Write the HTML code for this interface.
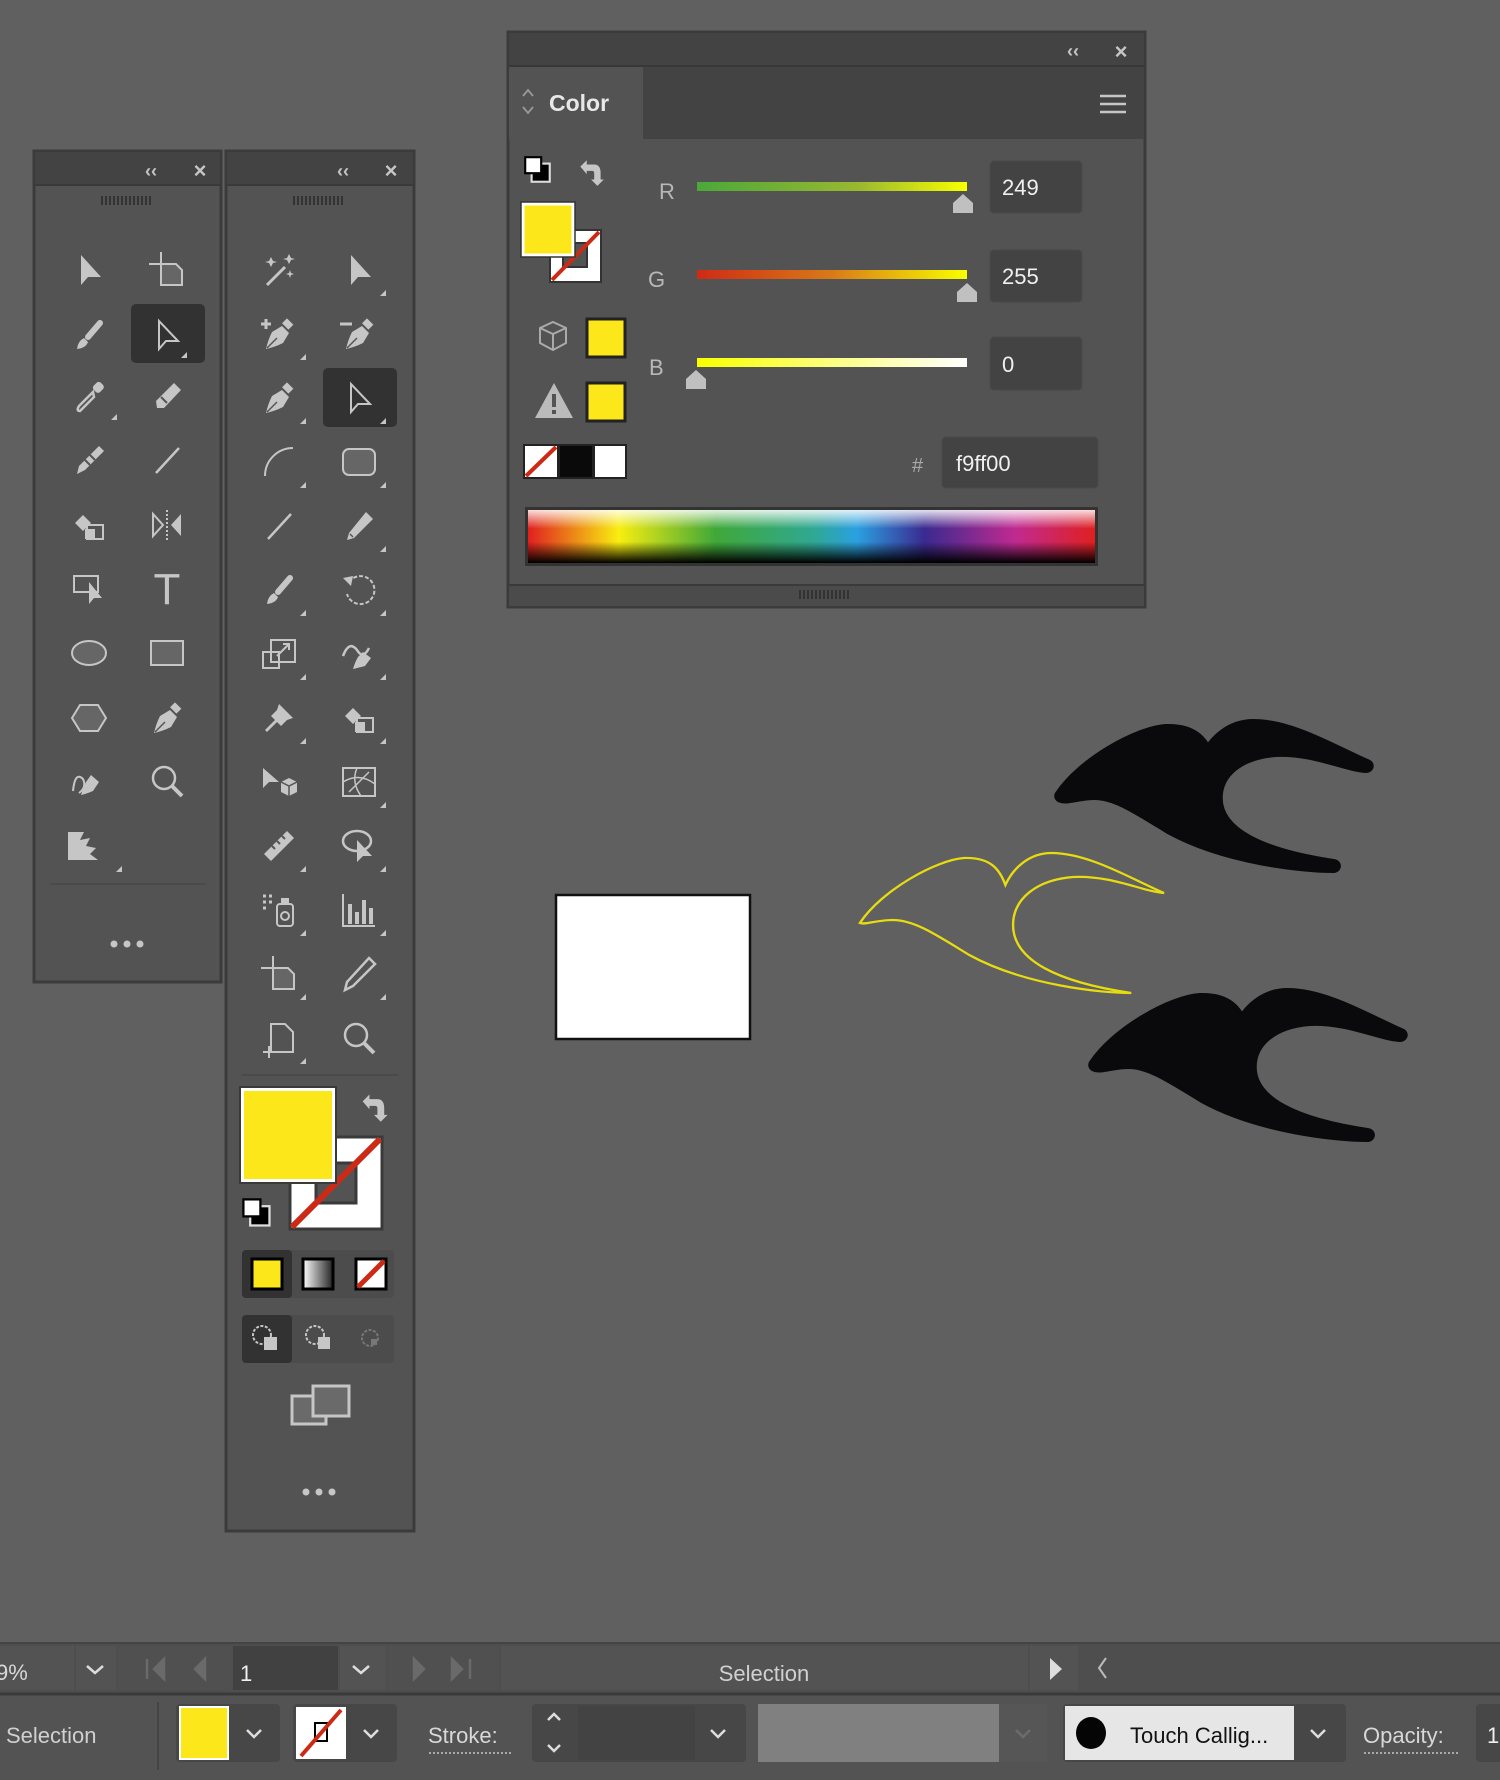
<!DOCTYPE html>
<html><head><meta charset="utf-8"><style>
html,body{margin:0;padding:0;background:#606060;}
svg{display:block}
text{font-family:"Liberation Sans",sans-serif}
</style></head><body>
<svg width="1500" height="1780" viewBox="0 0 1500 1780" xmlns="http://www.w3.org/2000/svg">
<defs>
<linearGradient id="gR" x1="0" x2="1"><stop offset="0" stop-color="#4aa83a"/><stop offset="0.6" stop-color="#9ab830"/><stop offset="1" stop-color="#f9ff00"/></linearGradient>
<linearGradient id="gG" x1="0" x2="1"><stop offset="0" stop-color="#d02a14"/><stop offset="0.5" stop-color="#d87a18"/><stop offset="1" stop-color="#f9ff00"/></linearGradient>
<linearGradient id="gB" x1="0" x2="1"><stop offset="0" stop-color="#f9ff00"/><stop offset="1" stop-color="#ffffff"/></linearGradient>
<linearGradient id="spec" x1="0" x2="1"><stop offset="0" stop-color="#e02020"/><stop offset="0.16" stop-color="#f8ee10"/><stop offset="0.33" stop-color="#40a838"/><stop offset="0.5" stop-color="#30a890"/><stop offset="0.58" stop-color="#2aa0e0"/><stop offset="0.7" stop-color="#3a2a90"/><stop offset="0.86" stop-color="#c02a90"/><stop offset="1" stop-color="#e02020"/></linearGradient>
<linearGradient id="specV" x1="0" x2="0" y1="0" y2="1"><stop offset="0" stop-color="#fff" stop-opacity="0.85"/><stop offset="0.35" stop-color="#fff" stop-opacity="0"/><stop offset="0.6" stop-color="#000" stop-opacity="0"/><stop offset="1" stop-color="#000" stop-opacity="1"/></linearGradient>
<linearGradient id="grad" x1="0" x2="1"><stop offset="0" stop-color="#fff"/><stop offset="1" stop-color="#222"/></linearGradient>
<symbol id="arrowF" viewBox="0 0 40 40"><polygon points="12,5 12,35 19,27 32,27" fill="#c6c6c6"/></symbol>
<symbol id="arrowO" viewBox="0 0 40 40"><polygon points="12,6 12,34 19,26 31,26" fill="none" stroke="#c6c6c6" stroke-width="2"/></symbol>
<symbol id="brush" viewBox="0 0 40 40"><line x1="31" y1="8" x2="19" y2="22" stroke="#c6c6c6" stroke-width="6" stroke-linecap="round"/><path d="M8,34 Q9,26 15,23 L19,27 Q17,33 8,34Z" fill="#c6c6c6"/></symbol>
<symbol id="pen" viewBox="0 0 40 40"><rect x="24" y="6" width="9" height="7" transform="rotate(45 28 10)" fill="#c6c6c6"/><path d="M23,12 L30,19 L24,29 Q16,33 7,35 Q9,26 13,18Z" fill="#c6c6c6"/><line x1="8" y1="34" x2="18" y2="24" stroke="#555" stroke-width="1.5"/></symbol>
<symbol id="pencil" viewBox="0 0 40 40"><polygon points="27,6 34,13 15,32 8,34 10,27" fill="#c6c6c6"/><line x1="11" y1="28" x2="14" y2="31" stroke="#555" stroke-width="1.5"/></symbol>
<symbol id="eraser" viewBox="0 0 40 40"><polygon points="27,6 34,13 17,31 10,31 9,24" fill="#c6c6c6"/><line x1="14" y1="20" x2="20" y2="26" stroke="#555" stroke-width="2"/></symbol>
<symbol id="drop" viewBox="0 0 40 40"><rect x="25" y="5" width="9" height="10" rx="3" transform="rotate(45 29 10)" fill="#c6c6c6"/><path d="M24,15 L10,29 Q7,34 11,34 L25,20Z" fill="none" stroke="#c6c6c6" stroke-width="2.5"/></symbol>
<symbol id="line" viewBox="0 0 40 40"><line x1="9" y1="33" x2="32" y2="8" stroke="#c6c6c6" stroke-width="2.5"/></symbol>
<symbol id="blob" viewBox="0 0 40 40"><path d="M30,6 L35,11 L16,30 L8,34 L10,26Z" fill="#c6c6c6"/><line x1="20" y1="14" x2="26" y2="20" stroke="#555" stroke-width="2"/><line x1="15" y1="19" x2="21" y2="25" stroke="#555" stroke-width="2"/></symbol>
<symbol id="bucket" viewBox="0 0 40 40"><path d="M6,18 L14,10 L22,18 L14,26Z" fill="#c6c6c6"/><rect x="18" y="20" width="16" height="14" fill="none" stroke="#c6c6c6" stroke-width="2"/><rect x="16" y="24" width="10" height="10" fill="#c6c6c6"/></symbol>
<symbol id="reflect" viewBox="0 0 40 40"><polygon points="6,9 6,31 16,20" fill="none" stroke="#c6c6c6" stroke-width="2"/><polygon points="34,9 34,31 24,20" fill="#c6c6c6"/><line x1="20" y1="5" x2="20" y2="36" stroke="#c6c6c6" stroke-width="2" stroke-dasharray="2 2"/></symbol>
<symbol id="touch" viewBox="0 0 40 40"><rect x="5" y="8" width="24" height="16" fill="none" stroke="#c6c6c6" stroke-width="2"/><polygon points="20,14 20,36 25,30 33,30" fill="#c6c6c6"/></symbol>
<symbol id="rect" viewBox="0 0 40 40"><rect x="4" y="8" width="32" height="24" fill="#666" stroke="#c6c6c6" stroke-width="2"/></symbol>
<symbol id="rrect" viewBox="0 0 40 40"><rect x="4" y="7" width="32" height="26" rx="6" fill="#666" stroke="#c6c6c6" stroke-width="2"/></symbol>
<symbol id="ellipse" viewBox="0 0 40 40"><ellipse cx="20" cy="20" rx="17" ry="12" fill="#666" stroke="#c6c6c6" stroke-width="2"/></symbol>
<symbol id="hex" viewBox="0 0 40 40"><polygon points="11,7 29,7 37,20 29,33 11,33 3,20" fill="#666" stroke="#c6c6c6" stroke-width="2"/></symbol>
<symbol id="zoom" viewBox="0 0 40 40"><circle cx="17" cy="17" r="11" fill="none" stroke="#c6c6c6" stroke-width="2.5"/><line x1="25" y1="25" x2="35" y2="35" stroke="#c6c6c6" stroke-width="4"/></symbol>
<symbol id="curv" viewBox="0 0 40 40"><path d="M4,30 Q6,10 14,18 Q18,26 10,32" fill="none" stroke="#c6c6c6" stroke-width="2"/><path d="M22,14 L30,21 L24,30 Q17,33 12,34 Q14,27 17,21Z" fill="#c6c6c6"/></symbol>
<symbol id="shaper" viewBox="0 0 40 40"><path d="M6,6 L6,34 L36,34 L28,28 L34,22 L24,20 L28,12 L18,14 L22,6Z" fill="#c6c6c6"/></symbol>
<symbol id="artb" viewBox="0 0 40 40"><line x1="14" y1="2" x2="14" y2="14" stroke="#c6c6c6" stroke-width="2"/><line x1="2" y1="14" x2="14" y2="14" stroke="#c6c6c6" stroke-width="2"/><path d="M14,14 L29,14 L35,20 L35,35 L14,35Z" fill="#666" stroke="#c6c6c6" stroke-width="2"/></symbol>
<symbol id="wand" viewBox="0 0 40 40"><line x1="8" y1="35" x2="26" y2="17" stroke="#c6c6c6" stroke-width="3"/><path d="M12,7 l2,4 4,1 -4,1 -2,4 -2,-4 -4,-1 4,-1z M30,4 l2,4 4,1 -4,1 -2,4 -2,-4 -4,-1 4,-1z M31,20 l1,3 3,1 -3,1 -1,3 -1,-3 -3,-1 3,-1z" fill="#c6c6c6"/></symbol>
<symbol id="penplus" viewBox="0 0 40 40"><use href="#pen"/><path d="M2,10 H12 M7,5 V15" stroke="#c6c6c6" stroke-width="3"/></symbol>
<symbol id="penminus" viewBox="0 0 40 40"><use href="#pen"/><path d="M1,10 H13" stroke="#c6c6c6" stroke-width="3"/></symbol>
<symbol id="arc" viewBox="0 0 40 40"><path d="M6,34 A28,28 0 0 1 34,6" fill="none" stroke="#c6c6c6" stroke-width="2"/></symbol>
<symbol id="rotate" viewBox="0 0 40 40"><path d="M10,12 A14,14 0 1 1 8,24" fill="none" stroke="#c6c6c6" stroke-width="2" stroke-dasharray="4 2"/><polygon points="4,8 14,6 12,16" fill="#c6c6c6"/></symbol>
<symbol id="scale" viewBox="0 0 40 40"><rect x="4" y="18" width="16" height="16" fill="none" stroke="#c6c6c6" stroke-width="2"/><rect x="12" y="6" width="24" height="22" fill="none" stroke="#c6c6c6" stroke-width="2"/><path d="M18,22 L30,10 M24,10 H30 V16" stroke="#c6c6c6" stroke-width="2" fill="none"/></symbol>
<symbol id="warp" viewBox="0 0 40 40"><path d="M4,22 Q10,6 18,16 Q24,26 30,14" fill="none" stroke="#c6c6c6" stroke-width="2.5"/><path d="M24,18 L32,24 L26,32 Q18,34 14,35 Q16,28 19,23Z" fill="#c6c6c6"/></symbol>
<symbol id="pin" viewBox="0 0 40 40"><path d="M20,6 L34,20 L28,22 L22,28 L18,24 L8,34 L6,32 L16,22 L12,18 L18,12Z" fill="#c6c6c6"/></symbol>
<symbol id="persp" viewBox="0 0 40 40"><polygon points="4,6 4,26 10,20 20,20" fill="#c6c6c6"/><path d="M22,20 L30,16 L38,20 L38,30 L30,34 L22,30Z" fill="#c6c6c6"/><path d="M22,20 L30,24 L38,20 M30,24 V34" stroke="#555" stroke-width="1.5" fill="none"/></symbol>
<symbol id="mesh" viewBox="0 0 40 40"><rect x="4" y="6" width="32" height="28" fill="none" stroke="#c6c6c6" stroke-width="2"/><path d="M4,20 Q20,10 36,22 M18,6 Q12,20 22,34 M10,30 L30,10" fill="none" stroke="#c6c6c6" stroke-width="1.5"/></symbol>
<symbol id="measure" viewBox="0 0 40 40"><polygon points="28,5 35,12 12,35 5,28" fill="#c6c6c6"/><path d="M13,20 l3,3 M18,15 l3,3 M23,10 l3,3" stroke="#555" stroke-width="2"/></symbol>
<symbol id="lasso" viewBox="0 0 40 40"><ellipse cx="18" cy="15" rx="14" ry="10" fill="none" stroke="#c6c6c6" stroke-width="2.5"/><polygon points="18,14 18,36 24,30 33,30" fill="#c6c6c6"/></symbol>
<symbol id="spray" viewBox="0 0 40 40"><rect x="18" y="14" width="16" height="22" rx="3" fill="none" stroke="#c6c6c6" stroke-width="2"/><circle cx="26" cy="26" r="4" fill="none" stroke="#c6c6c6" stroke-width="2"/><rect x="22" y="8" width="8" height="6" fill="#c6c6c6"/><path d="M4,6h3M10,6h3M4,12h3M10,12h3M4,18h3" stroke="#c6c6c6" stroke-width="3"/></symbol>
<symbol id="graph" viewBox="0 0 40 40"><path d="M4,4 V36 H36" fill="none" stroke="#c6c6c6" stroke-width="2"/><rect x="9" y="14" width="4" height="20" fill="#c6c6c6"/><rect x="16" y="22" width="4" height="12" fill="#c6c6c6"/><rect x="23" y="10" width="4" height="24" fill="#c6c6c6"/><rect x="30" y="18" width="4" height="16" fill="#c6c6c6"/></symbol>
<symbol id="knife" viewBox="0 0 40 40"><path d="M30,4 L36,10 L14,32 L6,36 L8,28Z" fill="none" stroke="#c6c6c6" stroke-width="2.5"/></symbol>
<symbol id="slice" viewBox="0 0 40 40"><path d="M12,6 H26 L34,14 V34 H12Z" fill="none" stroke="#c6c6c6" stroke-width="2"/><path d="M4,34 H16 M10,28 V40" stroke="#c6c6c6" stroke-width="2"/></symbol>
<symbol id="corner" viewBox="0 0 40 40"><polygon points="34,40 40,34 40,40" fill="#c6c6c6"/></symbol>
<symbol id="swapS" viewBox="0 0 30 30"><rect x="9" y="9" width="17" height="17" fill="#000" stroke="#ddd" stroke-width="2"/><rect x="3" y="3" width="15" height="15" fill="#fff" stroke="#000" stroke-width="2"/></symbol>
<symbol id="undo" viewBox="0 0 30 30"><path d="M5,10 L11,4 V8 H18 Q24,8 24,16 V22 H27 L21,28 L15,22 H18 V16 Q18,14 16,14 H11 V17Z" fill="#c6c6c6"/></symbol>
<symbol id="bird" viewBox="0 0 340 300" preserveAspectRatio="none" style="overflow:visible"><path d="M20,203 C40,170 90,140 115,138 C140,137 148,150 153,165 C160,148 175,133 195,133 C230,133 270,160 298,173 C280,172 250,155 215,157 C180,160 160,180 160,205 C160,240 200,262 268,273 C240,273 170,265 120,235 C90,215 70,200 50,200 C35,200 25,205 20,203 Z"/></symbol>
</defs>

<rect width="1500" height="1780" fill="#606060"/>

<!-- TOOLBAR 1 -->
<rect x="34" y="151" width="187" height="831" fill="#535353" stroke="#3b3b3b" stroke-width="3"/>
<rect x="35" y="152" width="185" height="33" fill="#434343"/>
<line x1="34" y1="185" x2="221" y2="185" stroke="#3a3a3a" stroke-width="2"/>
<text x="151" y="177" fill="#c6c6c6" font-size="18" text-anchor="middle" font-weight="bold">‹‹</text>
<text x="200" y="178" fill="#c6c6c6" font-size="22" text-anchor="middle" font-weight="bold">×</text>
<path d="M102,196v9M106,196v9M110,196v9M114,196v9M118,196v9M122,196v9M126,196v9M130,196v9M134,196v9M138,196v9M142,196v9M146,196v9M150,196v9" stroke="#333" stroke-width="2"/>
<rect x="131" y="304" width="74" height="59" rx="5" fill="#323232"/>
<g>
<use href="#arrowF" x="69" y="250" width="40" height="40"/><use href="#artb" x="147" y="250" width="40" height="40"/>
<use href="#brush" x="69" y="315" width="40" height="40"/><use href="#arrowO" x="147" y="315" width="40" height="40"/><use href="#corner" x="147" y="318" width="40" height="40"/>
<use href="#drop" x="69" y="377" width="40" height="40"/><use href="#corner" x="77" y="380" width="40" height="40"/><use href="#eraser" x="147" y="377" width="40" height="40"/>
<use href="#blob" x="69" y="440" width="40" height="40"/><use href="#line" x="147" y="440" width="40" height="40"/>
<use href="#bucket" x="69" y="505" width="40" height="40"/><use href="#reflect" x="147" y="505" width="40" height="40"/>
<use href="#touch" x="69" y="568" width="40" height="40"/><text x="167" y="604" fill="#c6c6c6" font-size="44" font-family="Liberation Serif" text-anchor="middle">T</text>
<use href="#ellipse" x="69" y="633" width="40" height="40"/><use href="#rect" x="147" y="633" width="40" height="40"/>
<use href="#hex" x="69" y="698" width="40" height="40"/><use href="#pen" x="147" y="698" width="40" height="40"/>
<use href="#curv" x="69" y="761" width="40" height="40"/><use href="#zoom" x="147" y="761" width="40" height="40"/>
<use href="#shaper" x="62" y="826" width="40" height="40"/><use href="#corner" x="82" y="832" width="40" height="40"/>
</g>
<line x1="50" y1="884" x2="206" y2="884" stroke="#4a4a4a" stroke-width="2"/>
<circle cx="114" cy="944" r="3.5" fill="#c6c6c6"/><circle cx="127" cy="944" r="3.5" fill="#c6c6c6"/><circle cx="140" cy="944" r="3.5" fill="#c6c6c6"/>

<!-- TOOLBAR 2 -->
<rect x="226" y="151" width="188" height="1380" fill="#535353" stroke="#3b3b3b" stroke-width="3"/>
<rect x="227" y="152" width="186" height="33" fill="#434343"/>
<line x1="226" y1="185" x2="414" y2="185" stroke="#3a3a3a" stroke-width="2"/>
<text x="343" y="177" fill="#c6c6c6" font-size="18" text-anchor="middle" font-weight="bold">‹‹</text>
<text x="391" y="178" fill="#c6c6c6" font-size="22" text-anchor="middle" font-weight="bold">×</text>
<path d="M294,196v9M298,196v9M302,196v9M306,196v9M310,196v9M314,196v9M318,196v9M322,196v9M326,196v9M330,196v9M334,196v9M338,196v9M342,196v9" stroke="#333" stroke-width="2"/>
<rect x="323" y="368" width="74" height="59" rx="5" fill="#323232"/>
<g>
<use href="#wand" x="259" y="250" width="40" height="40"/><use href="#arrowF" x="339" y="250" width="40" height="40"/><use href="#corner" x="346" y="256" width="40" height="40"/>
<use href="#penplus" x="259" y="314" width="40" height="40"/><use href="#corner" x="266" y="320" width="40" height="40"/><use href="#penminus" x="339" y="314" width="40" height="40"/>
<use href="#pen" x="259" y="378" width="40" height="40"/><use href="#corner" x="266" y="384" width="40" height="40"/><use href="#arrowO" x="339" y="378" width="40" height="40"/><use href="#corner" x="346" y="384" width="40" height="40"/>
<use href="#arc" x="259" y="442" width="40" height="40"/><use href="#corner" x="266" y="448" width="40" height="40"/><use href="#rrect" x="339" y="442" width="40" height="40"/><use href="#corner" x="346" y="448" width="40" height="40"/>
<use href="#line" x="259" y="506" width="40" height="40"/><use href="#pencil" x="339" y="506" width="40" height="40"/><use href="#corner" x="346" y="512" width="40" height="40"/>
<use href="#brush" x="259" y="570" width="40" height="40"/><use href="#corner" x="266" y="576" width="40" height="40"/><use href="#rotate" x="339" y="570" width="40" height="40"/><use href="#corner" x="346" y="576" width="40" height="40"/>
<use href="#scale" x="259" y="634" width="40" height="40"/><use href="#corner" x="266" y="640" width="40" height="40"/><use href="#warp" x="339" y="634" width="40" height="40"/><use href="#corner" x="346" y="640" width="40" height="40"/>
<use href="#pin" x="259" y="698" width="40" height="40"/><use href="#corner" x="266" y="704" width="40" height="40"/><use href="#bucket" x="339" y="698" width="40" height="40"/><use href="#corner" x="346" y="704" width="40" height="40"/>
<use href="#persp" x="259" y="762" width="40" height="40"/><use href="#mesh" x="339" y="762" width="40" height="40"/><use href="#corner" x="346" y="768" width="40" height="40"/>
<use href="#measure" x="259" y="826" width="40" height="40"/><use href="#corner" x="266" y="832" width="40" height="40"/><use href="#lasso" x="339" y="826" width="40" height="40"/><use href="#corner" x="346" y="832" width="40" height="40"/>
<use href="#spray" x="259" y="890" width="40" height="40"/><use href="#corner" x="266" y="896" width="40" height="40"/><use href="#graph" x="339" y="890" width="40" height="40"/><use href="#corner" x="346" y="896" width="40" height="40"/>
<use href="#artb" x="259" y="954" width="40" height="40"/><use href="#corner" x="266" y="960" width="40" height="40"/><use href="#knife" x="339" y="954" width="40" height="40"/><use href="#corner" x="346" y="960" width="40" height="40"/>
<use href="#slice" x="259" y="1018" width="40" height="40"/><use href="#corner" x="266" y="1024" width="40" height="40"/><use href="#zoom" x="339" y="1018" width="40" height="40"/>
</g>
<line x1="242" y1="1075" x2="398" y2="1075" stroke="#4a4a4a" stroke-width="2"/>
<rect x="290" y="1137" width="92" height="92" fill="#fff" stroke="#3a3a3a" stroke-width="3"/>
<rect x="316" y="1163" width="40" height="40" fill="#535353" stroke="#3a3a3a" stroke-width="3"/>
<line x1="292" y1="1227" x2="380" y2="1139" stroke="#cc2a14" stroke-width="6"/>
<rect x="242" y="1089" width="92" height="92" fill="#fce71a" stroke="#fff" stroke-width="4"/>
<rect x="240" y="1087" width="96" height="96" fill="none" stroke="#3a3a3a" stroke-width="2"/>
<use href="#undo" x="357" y="1090" width="34" height="34"/>
<use href="#swapS" x="240" y="1196" width="34" height="34"/>
<rect x="242" y="1250" width="152" height="48" rx="4" fill="#4c4c4c"/>
<rect x="242" y="1250" width="50" height="48" rx="4" fill="#323232"/>
<rect x="252" y="1259" width="30" height="30" fill="#fce71a" stroke="#000" stroke-width="3"/>
<rect x="303" y="1259" width="30" height="30" fill="url(#grad)" stroke="#000" stroke-width="3"/>
<rect x="356" y="1259" width="30" height="30" fill="#fff" stroke="#000" stroke-width="3"/>
<line x1="358" y1="1287" x2="384" y2="1261" stroke="#cc2a14" stroke-width="5"/>
<rect x="242" y="1315" width="152" height="48" rx="4" fill="#4c4c4c"/>
<rect x="242" y="1315" width="50" height="48" rx="4" fill="#323232"/>
<circle cx="262" cy="1335" r="9" fill="none" stroke="#c6c6c6" stroke-width="2" stroke-dasharray="3 1.5"/><rect x="264" y="1337" width="13" height="13" fill="#c6c6c6"/>
<circle cx="315" cy="1335" r="9" fill="none" stroke="#c6c6c6" stroke-width="2" stroke-dasharray="3 1.5"/><rect x="318" y="1337" width="12" height="12" fill="#c6c6c6"/>
<circle cx="370" cy="1338" r="8" fill="none" stroke="#777" stroke-width="2" stroke-dasharray="3 1.5"/><rect x="371" y="1339" width="6" height="6" fill="#777"/>
<rect x="292" y="1396" width="34" height="28" fill="#6a6a6a" stroke="#c6c6c6" stroke-width="3"/>
<rect x="313" y="1386" width="36" height="30" fill="#6a6a6a" stroke="#c6c6c6" stroke-width="3"/>
<circle cx="306" cy="1492" r="3.5" fill="#c6c6c6"/><circle cx="319" cy="1492" r="3.5" fill="#c6c6c6"/><circle cx="332" cy="1492" r="3.5" fill="#c6c6c6"/>

<!-- COLOR PANEL -->
<rect x="508" y="32" width="637" height="575" fill="#535353" stroke="#3b3b3b" stroke-width="3"/>
<rect x="509" y="33" width="635" height="33" fill="#434343"/>
<text x="1073" y="57" fill="#c6c6c6" font-size="18" text-anchor="middle" font-weight="bold">‹‹</text>
<text x="1121" y="59" fill="#c6c6c6" font-size="22" text-anchor="middle" font-weight="bold">×</text>
<rect x="509" y="66" width="635" height="73" fill="#434343"/>
<line x1="509" y1="66" x2="1144" y2="66" stroke="#383838" stroke-width="2"/>
<rect x="509" y="67" width="134" height="73" fill="#535353"/>
<path d="M523,96 l5,-6 5,6 M523,107 l5,6 5,-6" fill="none" stroke="#999" stroke-width="1.8"/>
<text x="549" y="111" fill="#e8e8e8" font-size="23" font-weight="bold">Color</text>
<path d="M1100,96h26M1100,104h26M1100,112h26" stroke="#c6c6c6" stroke-width="2.5"/>
<use href="#swapS" x="522" y="154" width="32" height="32"/>
<use href="#undo" x="575" y="156" width="32" height="32"/>
<rect x="550" y="230" width="51" height="52" fill="#fff" stroke="#333" stroke-width="2"/>
<rect x="563" y="243" width="24" height="24" fill="#535353" stroke="#333" stroke-width="2"/>
<line x1="552" y1="280" x2="599" y2="232" stroke="#cc2a14" stroke-width="4"/>
<rect x="523" y="204" width="50" height="51" fill="#fce71a" stroke="#fff" stroke-width="3"/>
<rect x="521" y="202" width="54" height="55" fill="none" stroke="#333" stroke-width="1.5"/>
<text x="659" y="199" fill="#b8b8b8" font-size="22">R</text>
<text x="648" y="287" fill="#b8b8b8" font-size="22">G</text>
<text x="649" y="375" fill="#b8b8b8" font-size="22">B</text>
<rect x="697" y="182" width="270" height="9" fill="url(#gR)"/>
<rect x="697" y="270" width="270" height="9" fill="url(#gG)"/>
<rect x="697" y="358" width="270" height="9" fill="url(#gB)"/>
<path d="M953,213 v-10 l10,-9 l10,9 v10z" fill="#c0c0c0"/>
<path d="M957,302 v-10 l10,-9 l10,9 v10z" fill="#c0c0c0"/>
<path d="M686,389 v-10 l10,-9 l10,9 v10z" fill="#c0c0c0"/>
<rect x="990" y="161" width="92" height="52" rx="4" fill="#434343" stroke="#4a4a4a"/>
<rect x="990" y="250" width="92" height="52" rx="4" fill="#434343" stroke="#4a4a4a"/>
<rect x="990" y="337" width="92" height="53" rx="4" fill="#434343" stroke="#4a4a4a"/>
<text x="1002" y="195" fill="#f0f0f0" font-size="22">249</text>
<text x="1002" y="284" fill="#f0f0f0" font-size="22">255</text>
<text x="1002" y="372" fill="#f0f0f0" font-size="22">0</text>
<path d="M553,322 l13,6 v15 l-13,7 l-13,-7 v-15z M540,328 l13,6 13,-6 M553,334 v16" fill="none" stroke="#aaa" stroke-width="2"/>
<rect x="587" y="319" width="38" height="38" fill="#fce71a" stroke="#222" stroke-width="3"/>
<path d="M554,383 L573,418 L535,418Z" fill="#bbb"/><rect x="552" y="394" width="4" height="13" fill="#535353"/><rect x="552" y="410" width="4" height="4" fill="#535353"/>
<rect x="587" y="383" width="38" height="38" fill="#fce71a" stroke="#222" stroke-width="3"/>
<rect x="523" y="444" width="104" height="35" fill="#222"/>
<rect x="525" y="446" width="32" height="31" fill="#fff"/><line x1="526" y1="476" x2="556" y2="447" stroke="#cc2a14" stroke-width="4"/>
<rect x="560" y="446" width="32" height="31" fill="#0a0a0a"/>
<rect x="595" y="446" width="30" height="31" fill="#fff"/>
<text x="912" y="472" fill="#aaa" font-size="20">#</text>
<rect x="942" y="437" width="156" height="51" rx="4" fill="#434343" stroke="#4a4a4a"/>
<text x="956" y="471" fill="#f0f0f0" font-size="22">f9ff00</text>
<rect x="525" y="507" width="573" height="59" fill="#333"/>
<rect x="528" y="510" width="567" height="53" fill="url(#spec)"/>
<rect x="528" y="510" width="567" height="53" fill="url(#specV)"/>
<rect x="509" y="585" width="635" height="21" fill="#4b4b4b"/>
<line x1="509" y1="585" x2="1144" y2="585" stroke="#3a3a3a" stroke-width="2"/>
<path d="M800,590v9M804,590v9M808,590v9M812,590v9M816,590v9M820,590v9M824,590v9M828,590v9M832,590v9M836,590v9M840,590v9M844,590v9M848,590v9" stroke="#333" stroke-width="2"/>

<!-- ARTWORK -->
<rect x="556" y="895" width="194" height="144" fill="#fff" stroke="#111" stroke-width="2.5"/>
<use href="#bird" x="838" y="720" width="372" height="300" fill="none" stroke="#e8dc10" stroke-width="2.2"/>
<use href="#bird" x="1040" y="593" width="372" height="300" fill="#0a0a0c" stroke="#0a0a0c" stroke-width="14" stroke-linejoin="round"/>
<use href="#bird" x="1074" y="862" width="372" height="300" fill="#0a0a0c" stroke="#0a0a0c" stroke-width="14" stroke-linejoin="round"/>

<!-- STATUS BAR -->
<rect x="0" y="1642" width="1500" height="52" fill="#4e4e4e"/>
<line x1="0" y1="1643" x2="1500" y2="1643" stroke="#444" stroke-width="2"/>
<rect x="0" y="1646" width="74" height="44" fill="#535353"/>
<rect x="76" y="1646" width="40" height="44" fill="#535353"/>
<rect x="118" y="1646" width="113" height="44" fill="#505050"/>
<rect x="233" y="1646" width="105" height="44" fill="#414141"/>
<rect x="340" y="1646" width="46" height="44" fill="#535353"/>
<rect x="388" y="1646" width="111" height="44" fill="#505050"/>
<rect x="501" y="1646" width="527" height="44" fill="#535353"/>
<rect x="1030" y="1646" width="48" height="44" fill="#535353"/>
<text x="-4" y="1680" fill="#d8d8d8" font-size="22">9%</text>
<path d="M87,1666 l8,7 8,-7" fill="none" stroke="#ddd" stroke-width="2.5"/>
<path d="M147,1659 v20 M164,1659 l-10,10 10,10z M205,1659 l-10,10 10,10z" fill="#6a6a6a" stroke="#6a6a6a" stroke-width="2.5"/>
<text x="240" y="1681" fill="#f0f0f0" font-size="22">1</text>
<path d="M353,1666 l8,7 8,-7" fill="none" stroke="#ddd" stroke-width="2.5"/>
<path d="M414,1659 l10,10 -10,10z M452,1659 l10,10 -10,10z M470,1659 v20" fill="#6a6a6a" stroke="#6a6a6a" stroke-width="2.5"/>
<text x="764" y="1681" fill="#d0d0d0" font-size="22" text-anchor="middle">Selection</text>
<path d="M1050,1658 l12,11 -12,11z" fill="#ddd"/>
<path d="M1106,1658 l-7,10 7,10" fill="none" stroke="#bbb" stroke-width="2"/>

<!-- CONTROL BAR -->
<rect x="0" y="1694" width="1500" height="86" fill="#535353"/>
<line x1="0" y1="1694" x2="1500" y2="1694" stroke="#3a3a3a" stroke-width="3"/>
<text x="6" y="1743" fill="#d0d0d0" font-size="22">Selection</text>
<line x1="158" y1="1702" x2="158" y2="1770" stroke="#444" stroke-width="2"/>
<rect x="176" y="1704" width="104" height="58" rx="4" fill="#474747"/>
<rect x="180" y="1707" width="48" height="52" fill="#fce71a" stroke="#fff" stroke-width="2"/>
<path d="M247,1730 l7,7 7,-7" fill="none" stroke="#ddd" stroke-width="2.5"/>
<rect x="293" y="1704" width="104" height="58" rx="4" fill="#474747"/>
<rect x="296" y="1707" width="50" height="52" fill="#fff"/>
<rect x="315" y="1723" width="12" height="18" fill="none" stroke="#000" stroke-width="2"/>
<line x1="301" y1="1756" x2="341" y2="1710" stroke="#cc2a14" stroke-width="4"/>
<path d="M364,1730 l7,7 7,-7" fill="none" stroke="#ddd" stroke-width="2.5"/>
<text x="428" y="1743" fill="#d8d8d8" font-size="22">Stroke:</text>
<path d="M429,1753 h83" stroke="#aaa" stroke-width="2" stroke-dasharray="2 2"/>
<rect x="532" y="1704" width="214" height="58" rx="4" fill="#474747"/>
<rect x="578" y="1706" width="117" height="54" fill="#434343"/>
<path d="M548,1720 l6,-6 6,6 M548,1745 l6,6 6,-6" fill="none" stroke="#ddd" stroke-width="2.5"/>
<path d="M711,1730 l7,7 7,-7" fill="none" stroke="#ddd" stroke-width="2.5"/>
<rect x="758" y="1704" width="241" height="58" fill="#808080"/>
<rect x="999" y="1704" width="48" height="58" fill="#565656"/>
<path d="M1016,1730 l7,7 7,-7" fill="none" stroke="#6c6c6c" stroke-width="2.5"/>
<rect x="1063" y="1704" width="283" height="58" rx="4" fill="#474747"/>
<rect x="1065" y="1706" width="229" height="54" fill="#e6e6e6"/>
<ellipse cx="1091" cy="1733" rx="15" ry="16" fill="#050505"/>
<text x="1130" y="1743" fill="#111" font-size="22">Touch Callig...</text>
<path d="M1311,1730 l7,7 7,-7" fill="none" stroke="#ddd" stroke-width="2.5"/>
<text x="1363" y="1743" fill="#d8d8d8" font-size="22">Opacity:</text>
<path d="M1364,1753 h96" stroke="#aaa" stroke-width="2" stroke-dasharray="2 2"/>
<rect x="1476" y="1704" width="40" height="58" rx="4" fill="#474747"/>
<text x="1487" y="1743" fill="#f0f0f0" font-size="22">1</text>
</svg>
</body></html>
